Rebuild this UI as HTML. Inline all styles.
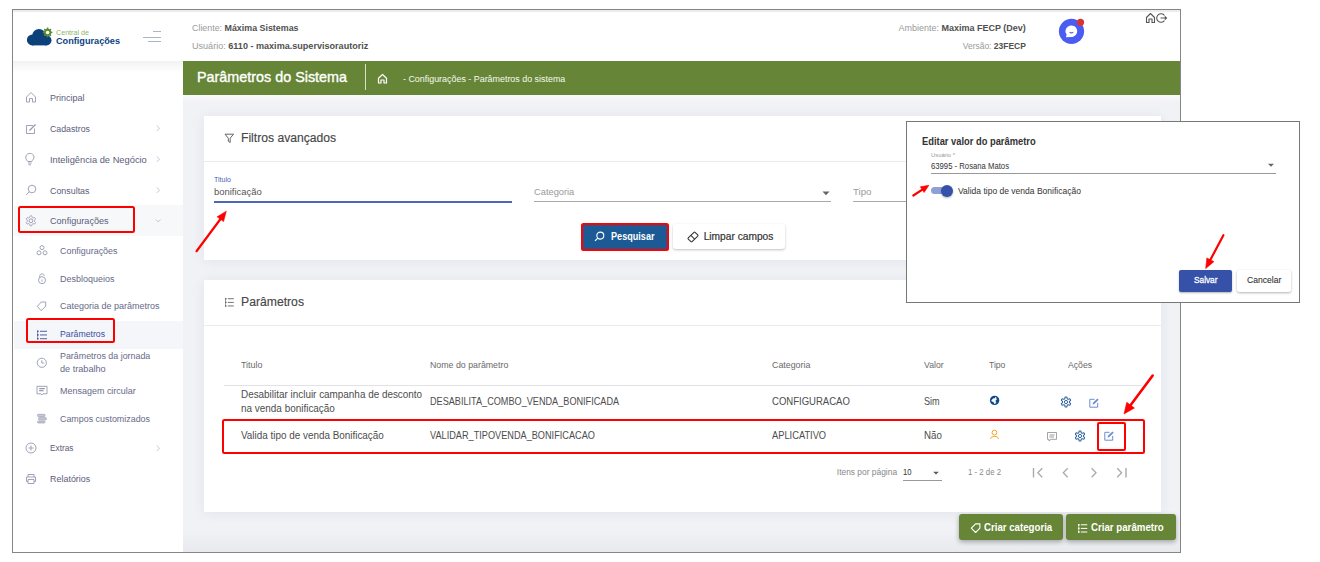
<!DOCTYPE html>
<html><head><meta charset="utf-8">
<style>
*{box-sizing:border-box;margin:0;padding:0}
html,body{width:1320px;height:562px;overflow:hidden;background:#fff;font-family:"Liberation Sans",sans-serif;position:relative}
.t{position:absolute;white-space:nowrap;line-height:1}
svg{overflow:visible}
</style></head><body>
<div style="position:absolute;left:12px;top:9px;width:1169px;height:544px;border:1px solid #858585;background:#fff"></div>
<div style="position:absolute;left:13px;top:10px;width:1167px;height:1.5px;background:#ececec"></div>
<svg style="position:absolute;left:20px;top:20px;" width="36" height="30" viewBox="0 0 36 30"><g fill="#0c4279" transform="translate(-20,-20)"><circle cx="39" cy="35.9" r="6.9"/><circle cx="32.4" cy="39.9" r="5.5"/><circle cx="46.4" cy="40.3" r="5.1"/><rect x="32.4" y="38" width="14" height="7.4"/></g>
<g transform="translate(27.6,12.4)"><path d="M0.00,-4.80 L0.31,-4.78 L0.62,-4.68 L0.82,-4.12 L0.95,-3.56 L1.16,-3.42 L1.38,-3.33 L1.60,-3.24 L1.84,-3.19 L2.33,-3.49 L2.87,-3.74 L3.16,-3.60 L3.39,-3.39 L3.60,-3.16 L3.74,-2.87 L3.49,-2.33 L3.19,-1.84 L3.24,-1.60 L3.33,-1.38 L3.42,-1.16 L3.56,-0.95 L4.12,-0.82 L4.68,-0.62 L4.78,-0.31 L4.80,-0.00 L4.78,0.31 L4.68,0.62 L4.12,0.82 L3.56,0.95 L3.42,1.16 L3.33,1.38 L3.24,1.60 L3.19,1.84 L3.49,2.33 L3.74,2.87 L3.60,3.16 L3.39,3.39 L3.16,3.60 L2.87,3.74 L2.33,3.49 L1.84,3.19 L1.60,3.24 L1.38,3.33 L1.16,3.42 L0.95,3.56 L0.82,4.12 L0.62,4.68 L0.31,4.78 L0.00,4.80 L-0.31,4.78 L-0.62,4.68 L-0.82,4.12 L-0.95,3.56 L-1.16,3.42 L-1.38,3.33 L-1.60,3.24 L-1.84,3.19 L-2.33,3.49 L-2.87,3.74 L-3.16,3.60 L-3.39,3.39 L-3.60,3.16 L-3.74,2.87 L-3.49,2.33 L-3.19,1.84 L-3.24,1.60 L-3.33,1.38 L-3.42,1.16 L-3.56,0.95 L-4.12,0.82 L-4.68,0.62 L-4.78,0.31 L-4.80,0.00 L-4.78,-0.31 L-4.68,-0.62 L-4.12,-0.82 L-3.56,-0.95 L-3.42,-1.16 L-3.33,-1.38 L-3.24,-1.60 L-3.19,-1.84 L-3.49,-2.33 L-3.74,-2.87 L-3.60,-3.16 L-3.39,-3.39 L-3.16,-3.60 L-2.87,-3.74 L-2.33,-3.49 L-1.84,-3.19 L-1.60,-3.24 L-1.38,-3.33 L-1.16,-3.42 L-0.95,-3.56 L-0.82,-4.12 L-0.62,-4.68 L-0.31,-4.78 Z" fill="#5a8a2e"/><circle r="1.75" fill="#fff"/></g></svg>
<div class="t" style="left:56.00px;top:28.68px;font-size:7.2px;color:#8fb46a;font-weight:400;;transform:scaleX(0.9948);transform-origin:left center">Central de</div>
<div class="t" style="left:56.00px;top:36.11px;font-size:9.4px;color:#0d4282;font-weight:700;;transform:scaleX(0.9750);transform-origin:left center">Configurações</div>
<div style="position:absolute;left:153px;top:31.4px;width:8.3px;height:1.1px;background:#aab6c6"></div>
<div style="position:absolute;left:143.3px;top:36.5px;width:17.8px;height:1.1px;background:#aab6c6"></div>
<div style="position:absolute;left:147.8px;top:41.4px;width:13.3px;height:1.1px;background:#aab6c6"></div>
<div class="t" style="left:191.80px;top:23.21px;font-size:9.4px;color:#9a9a9a;font-weight:400;;transform:scaleX(0.9460);transform-origin:left center">Cliente: <b style="color:#505050">Máxima Sistemas</b></div>
<div class="t" style="left:191.80px;top:40.51px;font-size:9.4px;color:#9a9a9a;font-weight:400;;transform:scaleX(0.9667);transform-origin:left center">Usuário: <b style="color:#505050">6110 - maxima.supervisorautoriz</b></div>
<div class="t" style="right:294.50px;top:22.91px;font-size:9.4px;color:#9a9a9a;font-weight:400;;transform:scaleX(0.9592);transform-origin:right center">Ambiente: <b style="color:#505050">Maxima FECP (Dev)</b></div>
<div class="t" style="right:294.50px;top:40.81px;font-size:9.4px;color:#9a9a9a;font-weight:400;;transform:scaleX(0.9034);transform-origin:right center">Versão: <b style="color:#505050">23FECP</b></div>
<svg style="position:absolute;left:1058px;top:18px;" width="28" height="28" viewBox="0 0 28 28"><circle cx="13.5" cy="13.3" r="12.6" fill="#4b5cf2"/>
<path d="M8 19.2 L8.6 16.3 C7.5 15 7.2 13.6 7.6 12 C8.3 9 11 7.4 13.6 7.5 C17 7.6 19.3 10.3 19.2 13.3 C19.1 16.6 16.4 19.2 13.2 19.1 Z" fill="#fff"/>
<path d="M11.6 14.3 Q13.4 15.6 15.2 14.3" stroke="#4b5cf2" stroke-width="1.2" fill="none"/>
<circle cx="22.5" cy="4.3" r="3.6" fill="#d83434"/></svg>
<svg style="position:absolute;left:1145px;top:12px;" width="24" height="12" viewBox="0 0 24 12"><path d="M1.5 10.5 V5.5 L5.5 1.5 L9.5 5.5 V10.5 H7 V7 H4 V10.5 Z" stroke="#555" stroke-width="1.1" fill="none" stroke-linejoin="round"/>
<path d="M19.5 3.5 A4.3 4.3 0 1 0 19.5 8.5" stroke="#555" stroke-width="1.1" fill="none"/><path d="M15.5 6 H21.5 M19.8 4.3 L21.5 6 L19.8 7.7" stroke="#555" stroke-width="1.1" fill="none"/></svg>
<div style="position:absolute;left:13px;top:61px;width:170px;height:12px;background:linear-gradient(#f2f2f4,#fff)"></div>
<div style="position:absolute;left:14px;top:205.2px;width:168.5px;height:30.7px;background:#f7f8fa"></div>
<div style="position:absolute;left:14px;top:320.6px;width:168.5px;height:28px;background:#f5f6f9"></div>
<div class="t" style="left:49.60px;top:93.24px;font-size:9.6px;color:#5b5e7b;font-weight:400;;transform:scaleX(0.9349);transform-origin:left center">Principal</div>
<div class="t" style="left:49.60px;top:123.94px;font-size:9.6px;color:#5b5e7b;font-weight:400;;transform:scaleX(0.9123);transform-origin:left center">Cadastros</div>
<div class="t" style="left:49.60px;top:154.64px;font-size:9.6px;color:#5b5e7b;font-weight:400;;transform:scaleX(0.9704);transform-origin:left center">Inteligência de Negócio</div>
<div class="t" style="left:49.60px;top:185.74px;font-size:9.6px;color:#5b5e7b;font-weight:400;;transform:scaleX(0.9257);transform-origin:left center">Consultas</div>
<div class="t" style="left:49.60px;top:216.14px;font-size:9.6px;color:#5b5e7b;font-weight:400;;transform:scaleX(0.9471);transform-origin:left center">Configurações</div>
<svg style="position:absolute;left:155px;top:124.1px;" width="6" height="8" viewBox="0 0 6 8"><path d="M1.8 1.5 L4.5 4.2 L1.8 6.9" stroke="#b5b8c8" stroke-width="0.8" fill="none"/></svg>
<svg style="position:absolute;left:155px;top:154.8px;" width="6" height="8" viewBox="0 0 6 8"><path d="M1.8 1.5 L4.5 4.2 L1.8 6.9" stroke="#b5b8c8" stroke-width="0.8" fill="none"/></svg>
<svg style="position:absolute;left:155px;top:185.9px;" width="6" height="8" viewBox="0 0 6 8"><path d="M1.8 1.5 L4.5 4.2 L1.8 6.9" stroke="#b5b8c8" stroke-width="0.8" fill="none"/></svg>
<svg style="position:absolute;left:155px;top:443.5px;" width="6" height="8" viewBox="0 0 6 8"><path d="M1.8 1.5 L4.5 4.2 L1.8 6.9" stroke="#b5b8c8" stroke-width="0.8" fill="none"/></svg>
<svg style="position:absolute;left:154px;top:218px;" width="8" height="6" viewBox="0 0 8 6"><path d="M1.8 1.5 L4.2 3.9 L6.6 1.5" stroke="#b5b8c8" stroke-width="0.8" fill="none"/></svg>
<svg style="position:absolute;left:25px;top:91px;" width="12" height="12" viewBox="0 0 12 12"><path d="M1.5 11 V6 L6 1.5 L10.5 6 V11 H7.5 V7.5 H4.5 V11 Z" stroke="#9598b0" stroke-width="0.9" fill="none" stroke-linejoin="round"/></svg>
<svg style="position:absolute;left:25px;top:122.5px;" width="12" height="12" viewBox="0 0 12 12"><path d="M8 2.5 H1.5 V10.5 H9.5 V5.5" stroke="#9598b0" stroke-width="0.9" fill="none"/><path d="M4.5 7.5 L10.5 1.5" stroke="#9598b0" stroke-width="1.2"/></svg>
<svg style="position:absolute;left:24px;top:152px;" width="12" height="14" viewBox="0 0 12 14"><path d="M3.5 9 C1 7 1 2.5 5 1.5 C9 0.8 11 4.5 9.5 7 C8.8 8 8 8.5 7.8 9.5 H3.8 Z M4 11 H7.6 M4.5 12.8 H7" stroke="#9598b0" stroke-width="0.9" fill="none"/></svg>
<svg style="position:absolute;left:25px;top:184px;" width="12" height="12" viewBox="0 0 12 12"><circle cx="7" cy="5" r="3.8" stroke="#9598b0" stroke-width="0.9" fill="none"/><path d="M4.3 7.7 L1.2 10.8" stroke="#9598b0" stroke-width="0.9"/></svg>
<svg style="position:absolute;left:25px;top:214.5px;" width="12" height="12" viewBox="0 0 12 12"><path d="M5.90,0.75 L6.23,0.77 L6.55,0.84 L6.84,1.06 L7.01,1.65 L7.11,2.23 L7.28,2.48 L7.47,2.61 L7.67,2.73 L7.88,2.84 L8.09,2.95 L8.39,2.96 L8.94,2.76 L9.53,2.62 L9.87,2.75 L10.09,3.00 L10.27,3.27 L10.42,3.57 L10.52,3.89 L10.47,4.25 L10.05,4.69 L9.60,5.06 L9.47,5.33 L9.45,5.57 L9.45,5.80 L9.45,6.03 L9.47,6.27 L9.60,6.54 L10.05,6.91 L10.47,7.35 L10.52,7.71 L10.42,8.03 L10.27,8.32 L10.09,8.60 L9.87,8.85 L9.53,8.98 L8.94,8.84 L8.39,8.64 L8.09,8.65 L7.88,8.76 L7.67,8.87 L7.47,8.99 L7.28,9.12 L7.11,9.37 L7.01,9.95 L6.84,10.54 L6.55,10.76 L6.23,10.83 L5.90,10.85 L5.57,10.83 L5.25,10.76 L4.96,10.54 L4.79,9.95 L4.69,9.37 L4.52,9.12 L4.33,8.99 L4.13,8.87 L3.92,8.76 L3.71,8.65 L3.41,8.64 L2.86,8.84 L2.27,8.98 L1.93,8.85 L1.71,8.60 L1.53,8.33 L1.38,8.03 L1.28,7.71 L1.33,7.35 L1.75,6.91 L2.20,6.54 L2.33,6.27 L2.35,6.03 L2.35,5.80 L2.35,5.57 L2.33,5.33 L2.20,5.06 L1.75,4.69 L1.33,4.25 L1.28,3.89 L1.38,3.57 L1.53,3.27 L1.71,3.00 L1.93,2.75 L2.27,2.62 L2.86,2.76 L3.41,2.96 L3.71,2.95 L3.92,2.84 L4.12,2.73 L4.33,2.61 L4.52,2.48 L4.69,2.23 L4.79,1.65 L4.96,1.06 L5.25,0.84 L5.57,0.77 Z" stroke="#9598b0" stroke-width="0.9" fill="none"/><circle cx="5.9" cy="5.8" r="1.9" stroke="#9598b0" stroke-width="0.9" fill="none"/></svg>
<div style="position:absolute;left:18.3px;top:206.4px;width:116.4px;height:26.3px;border:2.8px solid #f00;border-radius:2.5px"></div>
<div class="t" style="left:59.90px;top:245.74px;font-size:9.6px;color:#676a88;font-weight:400;;transform:scaleX(0.9293);transform-origin:left center">Configurações</div>
<div class="t" style="left:59.90px;top:273.64px;font-size:9.6px;color:#676a88;font-weight:400;;transform:scaleX(0.9357);transform-origin:left center">Desbloqueios</div>
<div class="t" style="left:59.90px;top:301.24px;font-size:9.6px;color:#676a88;font-weight:400;;transform:scaleX(0.9385);transform-origin:left center">Categoria de parâmetros</div>
<div class="t" style="left:59.90px;top:329.34px;font-size:9.6px;color:#3b4fa0;font-weight:400;;transform:scaleX(0.9074);transform-origin:left center">Parâmetros</div>
<div class="t" style="left:60.10px;top:351.04px;font-size:9.6px;color:#676a88;font-weight:400;;transform:scaleX(0.9253);transform-origin:left center">Parâmetros da jornada</div>
<div class="t" style="left:60.10px;top:364.44px;font-size:9.6px;color:#676a88;font-weight:400;;transform:scaleX(0.9518);transform-origin:left center">de trabalho</div>
<div class="t" style="left:60.10px;top:385.84px;font-size:9.6px;color:#676a88;font-weight:400;;transform:scaleX(0.9353);transform-origin:left center">Mensagem circular</div>
<div class="t" style="left:60.10px;top:413.74px;font-size:9.6px;color:#676a88;font-weight:400;;transform:scaleX(0.9274);transform-origin:left center">Campos customizados</div>
<div class="t" style="left:49.50px;top:443.34px;font-size:9.6px;color:#5b5e7b;font-weight:400;;transform:scaleX(0.8639);transform-origin:left center">Extras</div>
<div class="t" style="left:49.50px;top:473.54px;font-size:9.6px;color:#5b5e7b;font-weight:400;;transform:scaleX(0.9328);transform-origin:left center">Relatórios</div>
<svg style="position:absolute;left:36px;top:245px;" width="12" height="11" viewBox="0 0 12 11"><circle cx="6" cy="2.6" r="2" stroke="#9598b0" stroke-width="0.9" fill="none"/><circle cx="3" cy="7.8" r="2" stroke="#9598b0" stroke-width="0.9" fill="none"/><circle cx="9" cy="7.8" r="2" stroke="#9598b0" stroke-width="0.9" fill="none"/></svg>
<svg style="position:absolute;left:36px;top:272px;" width="12" height="13" viewBox="0 0 12 13"><path d="M3.8 5.5 V3.8 C3.8 1.2 8.2 1.2 8.2 3.8" stroke="#9598b0" stroke-width="0.9" fill="none"/><circle cx="6" cy="8.2" r="3.5" stroke="#9598b0" stroke-width="0.9" fill="none"/><path d="M6 7.5 V9.5" stroke="#9598b0" stroke-width="0.9"/></svg>
<svg style="position:absolute;left:32px;top:296px;" width="20" height="20" viewBox="0 0 20 20"><path d="M5.3 10.3 L9.3 6.0 H13.7 V10.3 L9.1 14.6 Z" stroke="#9598b0" stroke-width="0.9" fill="none" stroke-linejoin="round"/></svg>
<svg style="position:absolute;left:36px;top:328.5px;" width="12" height="12" viewBox="0 0 12 12"><g fill="#3b4fa0"><rect x="1" y="1.5" width="1.5" height="1.5"/><rect x="1" y="5.2" width="1.5" height="1.5"/><rect x="1" y="9" width="1.5" height="1.5"/><rect x="4" y="1.8" width="7" height="0.9"/><rect x="4" y="5.5" width="7" height="0.9"/><rect x="4" y="9.3" width="7" height="0.9"/><rect x="1.5" y="2" width="0.6" height="8"/></g></svg>
<div style="position:absolute;left:26px;top:318.2px;width:88.9px;height:24.5px;border:2.8px solid #f00;border-radius:2.5px"></div>
<svg style="position:absolute;left:36px;top:356.5px;" width="12" height="12" viewBox="0 0 12 12"><circle cx="5.8" cy="5.8" r="4.6" stroke="#9598b0" stroke-width="0.9" fill="none"/><path d="M5.8 3.2 V6 H8.2" stroke="#9598b0" stroke-width="0.9" fill="none"/></svg>
<svg style="position:absolute;left:36px;top:385px;" width="12" height="12" viewBox="0 0 12 12"><path d="M1 1.3 H11 V8.8 H6.8 L5.8 10 L4.8 8.8 H1 Z" stroke="#9598b0" stroke-width="0.9" fill="none" stroke-linejoin="round"/><path d="M3.2 3.6 H8.8 M3.2 5.6 H7.5" stroke="#9598b0" stroke-width="1.1"/></svg>
<svg style="position:absolute;left:36px;top:413px;" width="12" height="11" viewBox="0 0 12 11"><g fill="#c5c8d6" stroke="#9598b0" stroke-width="0.6"><rect x="1.5" y="1.3" width="7.5" height="2.2" rx="0.8"/><rect x="2.5" y="4.6" width="7.8" height="2.4" rx="0.8"/><rect x="1.5" y="8.1" width="7.5" height="1.9" rx="0.8"/></g></svg>
<svg style="position:absolute;left:25px;top:442px;" width="12" height="12" viewBox="0 0 12 12"><circle cx="6" cy="6" r="5" stroke="#9598b0" stroke-width="0.9" fill="none"/><path d="M6 3.5 V8.5 M3.5 6 H8.5" stroke="#9598b0" stroke-width="0.9"/></svg>
<svg style="position:absolute;left:25px;top:472.5px;" width="12" height="12" viewBox="0 0 12 12"><path d="M3 4 V1.5 H9 V4 M3 8.5 H1.5 V4 H10.5 V8.5 H9 M3 6.5 H9 V10.5 H3 Z" stroke="#9598b0" stroke-width="0.9" fill="none"/></svg>
<div style="position:absolute;left:183px;top:94.5px;width:997px;height:457.5px;background:#f1f2f6"></div>
<div style="position:absolute;left:183px;top:94.5px;width:997px;height:8px;background:linear-gradient(rgba(255,255,255,0.6),rgba(255,255,255,0))"></div>
<div style="position:absolute;left:183px;top:530px;width:997px;height:22px;background:linear-gradient(rgba(0,0,20,0),rgba(0,0,20,0.035))"></div>
<div style="position:absolute;left:183px;top:61px;width:997px;height:33.5px;background:#668536"></div>
<div class="t" style="left:196.70px;top:70.03px;font-size:14.2px;color:#fff;font-weight:400;-webkit-text-stroke:0.35px #fff;transform:scaleX(1.0118);transform-origin:left center">Parâmetros do Sistema</div>
<div style="position:absolute;left:365px;top:64.3px;width:1px;height:25.7px;background:#d8e0cc"></div>
<svg style="position:absolute;left:376.5px;top:72.5px;" width="12" height="11" viewBox="0 0 12 11"><path d="M1.5 10 V5.3 L5.5 1.5 L9.5 5.3 V10 H7 V7 H4 V10 Z" stroke="#fff" stroke-width="1.2" fill="none" stroke-linejoin="round"/></svg>
<div class="t" style="left:402.70px;top:73.64px;font-size:9.6px;color:#f6f8f0;font-weight:400;;transform:scaleX(0.9280);transform-origin:left center">- Configurações - Parâmetros do sistema</div>
<div style="position:absolute;left:204px;top:116px;width:957px;height:143.5px;background:#fff;box-shadow:0 1px 12px rgba(40,40,80,0.07)"></div>
<div style="position:absolute;left:204px;top:161.3px;width:957px;height:1px;background:#ececf0"></div>
<svg style="position:absolute;left:224px;top:133px;" width="11" height="11" viewBox="0 0 11 11"><path d="M1 1.2 H9.5 L6.2 5.2 V9.5 L4.3 8.3 V5.2 Z" stroke="#555" stroke-width="0.9" fill="none" stroke-linejoin="round"/></svg>
<div class="t" style="left:240.90px;top:131.94px;font-size:12.3px;color:#474747;font-weight:400;-webkit-text-stroke:0.15px #474747;transform:scaleX(0.9878);transform-origin:left center">Filtros avançados</div>
<div class="t" style="left:214.20px;top:176.65px;font-size:6.3px;color:#4a62b8;font-weight:400;;transform:scaleX(1.1139);transform-origin:left center">Titulo</div>
<div class="t" style="left:214.20px;top:187.39px;font-size:9.9px;color:#555;font-weight:400;;transform:scaleX(0.9566);transform-origin:left center">bonificação</div>
<div style="position:absolute;left:214.2px;top:200.6px;width:297.6px;height:2px;background:#4c67b8"></div>
<div class="t" style="left:533.60px;top:187.39px;font-size:9.9px;color:#999;font-weight:400;;transform:scaleX(0.9410);transform-origin:left center">Categoria</div>
<div style="position:absolute;left:533.6px;top:201.2px;width:297.7px;height:1px;background:#aaa"></div>
<svg style="position:absolute;left:822px;top:190.5px;" width="8" height="5" viewBox="0 0 8 5"><path d="M0.5 0.5 H7.5 L4 4.3 Z" fill="#666"/></svg>
<div class="t" style="left:853.00px;top:187.39px;font-size:9.9px;color:#999;font-weight:400;;transform:scaleX(0.9818);transform-origin:left center">Tipo</div>
<div style="position:absolute;left:853px;top:201.2px;width:60px;height:1px;background:#aaa"></div>
<div style="position:absolute;left:580.5px;top:222.8px;width:88px;height:28.1px;background:#1b5a94;border:2.8px solid #f00;border-radius:2.5px"></div>
<svg style="position:absolute;left:594px;top:231px;" width="11" height="11" viewBox="0 0 11 11"><circle cx="6.3" cy="4.6" r="3.5" stroke="#fff" stroke-width="1.1" fill="none"/><path d="M3.8 7.1 L1 9.9" stroke="#fff" stroke-width="1.2"/></svg>
<div class="t" style="left:610.50px;top:232.10px;font-size:10px;color:#fff;font-weight:700;;transform:scaleX(0.9098);transform-origin:left center">Pesquisar</div>
<div style="position:absolute;left:673.2px;top:224px;width:111.8px;height:24.6px;background:#fff;border-radius:3px;box-shadow:0 1px 2.5px rgba(0,0,0,0.25)"></div>
<svg style="position:absolute;left:687px;top:230.5px;" width="12" height="12" viewBox="0 0 12 12"><g transform="rotate(45 6 6)"><rect x="3.3" y="1.2" width="5.4" height="9.6" rx="0.8" stroke="#333" stroke-width="1.05" fill="none"/><path d="M3.3 6.3 H8.7" stroke="#333" stroke-width="1"/></g></svg>
<div class="t" style="left:703.70px;top:231.93px;font-size:10.2px;color:#333;font-weight:400;-webkit-text-stroke:0.2px #333">Limpar campos</div>
<div style="position:absolute;left:204px;top:280px;width:957px;height:232px;background:#fff;box-shadow:0 1px 12px rgba(40,40,80,0.07)"></div>
<div style="position:absolute;left:204px;top:325px;width:957px;height:1px;background:#ececf0"></div>
<svg style="position:absolute;left:224px;top:296.5px;" width="11" height="11" viewBox="0 0 11 11"><g fill="#666"><rect x="1" y="1" width="1.5" height="1.5"/><rect x="1" y="4.6" width="1.5" height="1.5"/><rect x="1" y="8.2" width="1.5" height="1.5"/><rect x="3.8" y="1.3" width="6" height="0.9"/><rect x="3.8" y="4.9" width="6" height="0.9"/><rect x="3.8" y="8.5" width="6" height="0.9"/><rect x="1.4" y="1.5" width="0.6" height="8"/></g></svg>
<div class="t" style="left:240.90px;top:296.05px;font-size:12.3px;color:#474747;font-weight:400;-webkit-text-stroke:0.15px #474747;transform:scaleX(0.9912);transform-origin:left center">Parâmetros</div>
<div class="t" style="left:240.60px;top:361.06px;font-size:8.4px;color:#6a6a6a;font-weight:400;;transform:scaleX(1.0658);transform-origin:left center">Titulo</div>
<div class="t" style="left:429.60px;top:361.06px;font-size:8.4px;color:#6a6a6a;font-weight:400;;transform:scaleX(1.0512);transform-origin:left center">Nome do parâmetro</div>
<div class="t" style="left:771.80px;top:361.06px;font-size:8.4px;color:#6a6a6a;font-weight:400;;transform:scaleX(1.0570);transform-origin:left center">Categoria</div>
<div class="t" style="left:924.30px;top:361.06px;font-size:8.4px;color:#6a6a6a;font-weight:400;;transform:scaleX(1.0350);transform-origin:left center">Valor</div>
<div class="t" style="left:988.70px;top:361.06px;font-size:8.4px;color:#6a6a6a;font-weight:400;;transform:scaleX(1.0260);transform-origin:left center">Tipo</div>
<div class="t" style="left:1068.20px;top:361.06px;font-size:8.4px;color:#6a6a6a;font-weight:400;;transform:scaleX(1.0352);transform-origin:left center">Ações</div>
<div style="position:absolute;left:223.8px;top:385px;width:917.5px;height:1px;background:#e2e2e6"></div>
<div class="t" style="left:240.60px;top:389.80px;font-size:10px;color:#4d4d4d;font-weight:400;;transform:scaleX(0.9902);transform-origin:left center">Desabilitar incluir campanha de desconto</div>
<div class="t" style="left:240.60px;top:403.80px;font-size:10px;color:#4d4d4d;font-weight:400;;transform:scaleX(0.9933);transform-origin:left center">na venda bonificação</div>
<div class="t" style="left:429.60px;top:397.03px;font-size:10.2px;color:#4d4d4d;font-weight:400;;transform:scaleX(0.8963);transform-origin:left center">DESABILITA_COMBO_VENDA_BONIFICADA</div>
<div class="t" style="left:771.80px;top:397.03px;font-size:10.2px;color:#4d4d4d;font-weight:400;;transform:scaleX(0.9351);transform-origin:left center">CONFIGURACAO</div>
<div class="t" style="left:924.30px;top:397.03px;font-size:10.2px;color:#4d4d4d;font-weight:400;;transform:scaleX(0.8947);transform-origin:left center">Sim</div>
<div class="t" style="left:240.60px;top:430.70px;font-size:10px;color:#4d4d4d;font-weight:400;;transform:scaleX(0.9891);transform-origin:left center">Valida tipo de venda Bonificação</div>
<div class="t" style="left:429.60px;top:430.53px;font-size:10.2px;color:#4d4d4d;font-weight:400;;transform:scaleX(0.8999);transform-origin:left center">VALIDAR_TIPOVENDA_BONIFICACAO</div>
<div class="t" style="left:771.80px;top:430.53px;font-size:10.2px;color:#4d4d4d;font-weight:400;;transform:scaleX(0.9128);transform-origin:left center">APLICATIVO</div>
<div class="t" style="left:924.30px;top:430.53px;font-size:10.2px;color:#4d4d4d;font-weight:400;;transform:scaleX(0.9571);transform-origin:left center">Não</div>
<svg style="position:absolute;left:988.5px;top:395px;" width="11" height="11" viewBox="0 0 11 11"><circle cx="5.6" cy="5.4" r="4.7" fill="#0d4a8c"/><path d="M6.9 2.0 L5.8 3.5 L4.3 3.6 L2.8 5.0 L2.6 6.1 L4.3 6.7 L5.2 7.8 L5.8 9.0 L6.9 7.8 L6.6 6.4 L6.3 5.6 L7.5 4.7 L7.2 3.5 Z" fill="#fff" stroke="#fff" stroke-width="0.4" stroke-linejoin="round"/></svg>
<svg style="position:absolute;left:988.5px;top:429px;" width="11" height="11" viewBox="0 0 11 11"><circle cx="5.5" cy="3.6" r="2.4" stroke="#f5a623" stroke-width="1" fill="none"/><path d="M1.5 10 C1.5 6.5 9.5 6.5 9.5 10" stroke="#f5a623" stroke-width="1" fill="none"/></svg>
<svg style="position:absolute;left:1060.4px;top:396.2px;" width="12" height="12" viewBox="0 0 12 12"><path d="M6.00,1.00 L6.33,1.02 L6.65,1.09 L6.93,1.33 L7.09,1.94 L7.17,2.56 L7.32,2.81 L7.51,2.94 L7.70,3.06 L7.89,3.17 L8.10,3.26 L8.40,3.27 L8.97,3.03 L9.58,2.86 L9.93,2.99 L10.15,3.23 L10.33,3.50 L10.48,3.79 L10.57,4.11 L10.51,4.47 L10.06,4.91 L9.57,5.29 L9.42,5.55 L9.40,5.78 L9.40,6.00 L9.40,6.22 L9.42,6.45 L9.57,6.71 L10.06,7.09 L10.51,7.53 L10.57,7.89 L10.48,8.21 L10.33,8.50 L10.15,8.77 L9.93,9.01 L9.58,9.14 L8.97,8.97 L8.40,8.73 L8.10,8.74 L7.89,8.83 L7.70,8.94 L7.51,9.06 L7.32,9.19 L7.17,9.44 L7.09,10.06 L6.93,10.67 L6.65,10.91 L6.33,10.98 L6.00,11.00 L5.67,10.98 L5.35,10.91 L5.07,10.67 L4.91,10.06 L4.83,9.44 L4.68,9.19 L4.49,9.06 L4.30,8.94 L4.11,8.83 L3.90,8.74 L3.60,8.73 L3.03,8.97 L2.42,9.14 L2.07,9.01 L1.85,8.77 L1.67,8.50 L1.52,8.21 L1.43,7.89 L1.49,7.53 L1.94,7.09 L2.43,6.71 L2.58,6.45 L2.60,6.22 L2.60,6.00 L2.60,5.78 L2.58,5.55 L2.43,5.29 L1.94,4.91 L1.49,4.47 L1.43,4.11 L1.52,3.79 L1.67,3.50 L1.85,3.23 L2.07,2.99 L2.42,2.86 L3.03,3.03 L3.60,3.27 L3.90,3.26 L4.11,3.17 L4.30,3.06 L4.49,2.94 L4.68,2.81 L4.83,2.56 L4.91,1.94 L5.07,1.33 L5.35,1.09 L5.67,1.02 Z" stroke="#33679f" stroke-width="1.1" fill="none"/><circle cx="6" cy="6" r="1.6" stroke="#33679f" stroke-width="1" fill="none"/></svg>
<svg style="position:absolute;left:1088.3px;top:396.5px;" width="12" height="12" viewBox="0 0 12 12"><path d="M6.5 2.3 H1.8 V10.2 H9.7 V5.8" stroke="#6a8dd4" stroke-width="1" fill="none"/><path d="M4.6 7.4 L5 5.8 L9.4 1.4 L10.7 2.7 L6.3 7.1 Z" fill="#6a8dd4"/></svg>
<svg style="position:absolute;left:1046px;top:430.5px;" width="12" height="11" viewBox="0 0 12 11"><path d="M1.5 1.5 H10.5 V8.3 H5 L3 10 V8.3 H1.5 Z" stroke="#999" stroke-width="0.9" fill="none"/><path d="M3.5 4 H8.5 M3.5 6 H8" stroke="#999" stroke-width="1"/></svg>
<svg style="position:absolute;left:1074.4px;top:429.8px;" width="12" height="12" viewBox="0 0 12 12"><path d="M6.00,1.00 L6.33,1.02 L6.65,1.09 L6.93,1.33 L7.09,1.94 L7.17,2.56 L7.32,2.81 L7.51,2.94 L7.70,3.06 L7.89,3.17 L8.10,3.26 L8.40,3.27 L8.97,3.03 L9.58,2.86 L9.93,2.99 L10.15,3.23 L10.33,3.50 L10.48,3.79 L10.57,4.11 L10.51,4.47 L10.06,4.91 L9.57,5.29 L9.42,5.55 L9.40,5.78 L9.40,6.00 L9.40,6.22 L9.42,6.45 L9.57,6.71 L10.06,7.09 L10.51,7.53 L10.57,7.89 L10.48,8.21 L10.33,8.50 L10.15,8.77 L9.93,9.01 L9.58,9.14 L8.97,8.97 L8.40,8.73 L8.10,8.74 L7.89,8.83 L7.70,8.94 L7.51,9.06 L7.32,9.19 L7.17,9.44 L7.09,10.06 L6.93,10.67 L6.65,10.91 L6.33,10.98 L6.00,11.00 L5.67,10.98 L5.35,10.91 L5.07,10.67 L4.91,10.06 L4.83,9.44 L4.68,9.19 L4.49,9.06 L4.30,8.94 L4.11,8.83 L3.90,8.74 L3.60,8.73 L3.03,8.97 L2.42,9.14 L2.07,9.01 L1.85,8.77 L1.67,8.50 L1.52,8.21 L1.43,7.89 L1.49,7.53 L1.94,7.09 L2.43,6.71 L2.58,6.45 L2.60,6.22 L2.60,6.00 L2.60,5.78 L2.58,5.55 L2.43,5.29 L1.94,4.91 L1.49,4.47 L1.43,4.11 L1.52,3.79 L1.67,3.50 L1.85,3.23 L2.07,2.99 L2.42,2.86 L3.03,3.03 L3.60,3.27 L3.90,3.26 L4.11,3.17 L4.30,3.06 L4.49,2.94 L4.68,2.81 L4.83,2.56 L4.91,1.94 L5.07,1.33 L5.35,1.09 L5.67,1.02 Z" stroke="#33679f" stroke-width="1.1" fill="none"/><circle cx="6" cy="6" r="1.6" stroke="#33679f" stroke-width="1" fill="none"/></svg>
<svg style="position:absolute;left:1102.5px;top:430.2px;" width="12" height="12" viewBox="0 0 12 12"><path d="M6.5 2.3 H1.8 V10.2 H9.7 V5.8" stroke="#6a8dd4" stroke-width="1" fill="none"/><path d="M4.6 7.4 L5 5.8 L9.4 1.4 L10.7 2.7 L6.3 7.1 Z" fill="#6a8dd4"/></svg>
<div style="position:absolute;left:222.1px;top:419.2px;width:923.1px;height:35.2px;border:2.8px solid #f00;border-radius:2.5px"></div>
<div style="position:absolute;left:1096.5px;top:421.7px;width:29.5px;height:29.6px;border:2.8px solid #f00;border-radius:2px"></div>
<div class="t" style="right:422.90px;top:468.42px;font-size:8.8px;color:#888;font-weight:400;;transform:scaleX(0.9557);transform-origin:right center">Itens por página</div>
<div class="t" style="left:903.00px;top:468.00px;font-size:9.3px;color:#333;font-weight:400;;transform:scaleX(0.8218);transform-origin:left center">10</div>
<div style="position:absolute;left:903px;top:480.2px;width:38.8px;height:1px;background:#999"></div>
<svg style="position:absolute;left:932px;top:470.8px;" width="8" height="5" viewBox="0 0 8 5"><path d="M1.2 0.8 H6.8 L4 3.6 Z" fill="#555"/></svg>
<div class="t" style="left:967.70px;top:468.42px;font-size:8.8px;color:#888;font-weight:400;;transform:scaleX(0.8878);transform-origin:left center">1 - 2 de 2</div>
<svg style="position:absolute;left:1031px;top:466px;" width="13" height="13" viewBox="0 0 13 13"><path d="M2.5 2 V11.5" stroke="#aaa" stroke-width="1.4"/><path d="M11.2 2.2 L6.8 6.8 L11.2 11.3" stroke="#aaa" stroke-width="1.3" fill="none"/></svg>
<svg style="position:absolute;left:1060px;top:466px;" width="13" height="13" viewBox="0 0 13 13"><path d="M7.7 2.2 L3.3 6.8 L7.7 11.3" stroke="#aaa" stroke-width="1.3" fill="none"/></svg>
<svg style="position:absolute;left:1088px;top:466px;" width="13" height="13" viewBox="0 0 13 13"><path d="M3.6 2.2 L8.0 6.8 L3.6 11.3" stroke="#aaa" stroke-width="1.3" fill="none"/></svg>
<svg style="position:absolute;left:1115px;top:466px;" width="13" height="13" viewBox="0 0 13 13"><path d="M2.2 2.2 L6.6 6.8 L2.2 11.3" stroke="#aaa" stroke-width="1.3" fill="none"/><path d="M11 2 V11.5" stroke="#aaa" stroke-width="1.4"/></svg>
<div style="position:absolute;left:959px;top:514.3px;width:104px;height:25.3px;background:#668536;border-radius:3px;box-shadow:0 2px 5px rgba(0,0,0,0.32)"></div>
<svg style="position:absolute;left:970px;top:522px;" width="11" height="11" viewBox="0 0 11 11"><path d="M1.3 6.2 L5.6 1.9 H9.9 V6.2 L5.6 10.5 Z" stroke="#fff" stroke-width="1.1" fill="none" stroke-linejoin="round"/></svg>
<div class="t" style="left:983.60px;top:521.58px;font-size:10.5px;color:#fff;font-weight:700;;transform:scaleX(0.9201);transform-origin:left center">Criar categoria</div>
<div style="position:absolute;left:1066px;top:514.3px;width:109.5px;height:25.3px;background:#668536;border-radius:3px;box-shadow:0 2px 5px rgba(0,0,0,0.32)"></div>
<svg style="position:absolute;left:1077px;top:522.5px;" width="11" height="11" viewBox="0 0 11 11"><g fill="#fff"><rect x="1" y="1" width="1.6" height="1.6"/><rect x="1" y="4.6" width="1.6" height="1.6"/><rect x="1" y="8.2" width="1.6" height="1.6"/><rect x="3.8" y="1.3" width="6.5" height="1"/><rect x="3.8" y="4.9" width="6.5" height="1"/><rect x="3.8" y="8.5" width="6.5" height="1"/><rect x="1.5" y="1.5" width="0.6" height="8"/></g></svg>
<div class="t" style="left:1091.40px;top:521.58px;font-size:10.5px;color:#fff;font-weight:700;;transform:scaleX(0.9228);transform-origin:left center">Criar parâmetro</div>
<div style="position:absolute;left:906.4px;top:121.3px;width:393.5px;height:182px;background:#fff;border:1px solid #777"></div>
<div class="t" style="left:922.40px;top:136.66px;font-size:10.4px;color:#333;font-weight:700;;transform:scaleX(0.8982);transform-origin:left center">Editar valor do parâmetro</div>
<div class="t" style="left:931.20px;top:151.73px;font-size:6.2px;color:#999;font-weight:400;;transform:scaleX(0.9429);transform-origin:left center">Usuário *</div>
<div class="t" style="left:931.20px;top:162.63px;font-size:8.2px;color:#333;font-weight:400;;transform:scaleX(0.9415);transform-origin:left center">63995 - Rosana Matos</div>
<div style="position:absolute;left:931.2px;top:173px;width:344.5px;height:1px;background:#999"></div>
<svg style="position:absolute;left:1267px;top:163px;" width="8" height="5" viewBox="0 0 8 5"><path d="M1 0.8 H7 L4 3.8 Z" fill="#666"/></svg>
<div style="position:absolute;left:931.2px;top:187.3px;width:17px;height:7.2px;background:#8fa0d8;border-radius:4px"></div>
<div style="position:absolute;left:940.8px;top:184.9px;width:12px;height:12px;background:#3652a8;border-radius:50%;box-shadow:0 1px 2px rgba(0,0,0,0.3)"></div>
<div class="t" style="left:958.00px;top:186.75px;font-size:9px;color:#333;font-weight:400;;transform:scaleX(0.9466);transform-origin:left center">Valida tipo de venda Bonificação</div>
<div style="position:absolute;left:1178.9px;top:270.4px;width:53px;height:21.6px;background:#3652a8;border-radius:2px;box-shadow:0 1px 2px rgba(0,0,0,0.3)"></div>
<div class="t" style="left:1193.60px;top:276.40px;font-size:9.3px;color:#fff;font-weight:400;-webkit-text-stroke:0.3px #fff;transform:scaleX(0.8915);transform-origin:left center">Salvar</div>
<div style="position:absolute;left:1237px;top:270.4px;width:54px;height:21.6px;background:#fff;border-radius:2px;box-shadow:0 1px 2.5px rgba(0,0,0,0.3)"></div>
<div class="t" style="left:1246.80px;top:276.40px;font-size:9.3px;color:#333;font-weight:400;-webkit-text-stroke:0.1px #333;transform:scaleX(0.9216);transform-origin:left center">Cancelar</div>
<svg style="position:absolute;left:0;top:0" width="1320" height="562"><line x1="196.6" y1="251.1" x2="221.5231917123206" y2="217.6173283056703" stroke="#f00" stroke-width="2.4" stroke-linecap="round"/><polygon points="226.3,211.2 223.5376537932359,221.61006452592756 217.1203254875656,216.83325623824817" fill="#f00" stroke="#f00" stroke-width="0.6" stroke-linejoin="round"/><line x1="913.3" y1="195.5" x2="923.8781823161587" y2="188.58349617789622" stroke="#f00" stroke-width="2.2" stroke-linecap="round"/><polygon points="928.9,185.3 924.0648909223528,192.5236915913717 920.3435952540704,186.83229821635155" fill="#f00" stroke="#f00" stroke-width="0.6" stroke-linejoin="round"/><line x1="1223.4" y1="235.2" x2="1209.446018637454" y2="261.5312416671775" stroke="#f00" stroke-width="2.2" stroke-linecap="round"/><polygon points="1205.7,268.6 1206.8481441304061,257.8910427652449 1213.9169024632288,261.63706140269875" fill="#f00" stroke="#f00" stroke-width="0.6" stroke-linejoin="round"/><line x1="1152.7" y1="375.5" x2="1129.3789858860914" y2="406.7842872259749" stroke="#f00" stroke-width="2.6" stroke-linecap="round"/><polygon points="1124,414 1126.725935936854,402.31200302583164 1134.4226962291473,408.0495879709959" fill="#f00" stroke="#f00" stroke-width="0.6" stroke-linejoin="round"/></svg>
</body></html>
